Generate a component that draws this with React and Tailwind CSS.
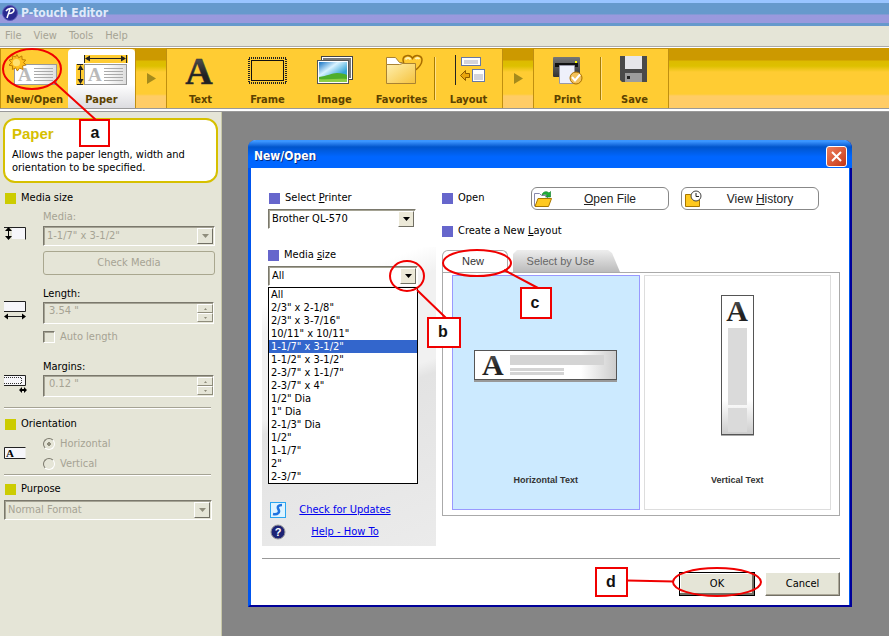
import React from "react";

const MEDIA_SIZES = [
  "All",
  '2/3" x 2-1/8"',
  '2/3" x 3-7/16"',
  '10/11" x 10/11"',
  '1-1/7" x 3-1/2"',
  '1-1/2" x 3-1/2"',
  '2-3/7" x 1-1/7"',
  '2-3/7" x 4"',
  '1/2" Dia',
  '1" Dia',
  '2-1/3" Dia',
  '1/2"',
  '1-1/7"',
  '2"',
  '2-3/7"',
];

const SERIF = "Liberation Serif, serif";

/* ---------- toolbar icons ---------- */

function Label({ x, y }) {
  return (
    <g>
      <rect x={x + 0.5} y={y + 0.5} width="42" height="20" fill="url(#labelFill)" stroke="#999" />
      <text x={x + 4} y={y + 17} fontFamily={SERIF} fontWeight="bold" fontSize="19" fill="#b9b9b9">A</text>
      <path d={`M${x + 20} ${y + 4.5}h19M${x + 20} ${y + 7.5}h19M${x + 20} ${y + 10.5}h19M${x + 20} ${y + 13.5}h19M${x + 20} ${y + 16.5}h19`} stroke="#aaa" />
      <defs>
        <linearGradient id="labelFill" x1="0" x2="1">
          <stop offset="0.5" stopColor="#fff" />
          <stop offset="1" stopColor="#ddd" />
        </linearGradient>
      </defs>
    </g>
  );
}

function NewOpenIcon() {
  return (
    <svg width="52" height="34" aria-hidden="true">
      <Label x={5} y={12} />
      <g transform="translate(-2 -1) scale(.9)">
        <path d="M11 4l2 3.5 3.500-2 .3 4 4 .5-2.500 3 3 2.500-4 1 .5 4-3.800-1.500-2.500 3.300-1.800-3.500-3.700 1.700.2-4-4-.7 2.800-3-2.800-2.700 4-1-.5-4 3.700 1.600z" fill="#ffbf1f" stroke="#b87400" />
        <circle cx="10.500" cy="13" r="4" fill="#ffe070" />
      </g>
    </svg>
  );
}

function PaperIcon() {
  return (
    <svg width="52" height="34" aria-hidden="true">
      <path d="M8 3h44v8H8zM0 12h8v21H0z" fill="#fc3" />
      <Label x={8} y={12} />
      <path d="M8.500 3v8M50.500 3v8M10 6.500h39M1 12.500h6M1 32.500h6M4.500 14v17" stroke="#222" />
      <path d="M9 6.500l5-3v6zM50 6.500l-5-3v6zM4.500 13l-3 5h6zM4.500 32l-3-5h6z" fill="#222" />
    </svg>
  );
}

function TextIcon() {
  return (
    <svg width="52" height="34" className="overflow-visible" aria-hidden="true">
      <defs>
        <linearGradient id="ink" x1="0" y1="0" x2="0" y2="1">
          <stop offset="0" stopColor="#666" />
          <stop offset="0.6" stopColor="#222" />
        </linearGradient>
      </defs>
      <text x="24" y="32" textAnchor="middle" fontFamily={SERIF} fontWeight="bold" fontSize="38" fill="url(#ink)" stroke="#333" strokeWidth=".5">A</text>
    </svg>
  );
}

function FrameIcon() {
  return (
    <svg width="52" height="34" aria-hidden="true">
      <rect x="7" y="6" width="37" height="25" fill="none" stroke="#222" strokeWidth="2" strokeDasharray="1 1" />
      <rect x="9.500" y="8.500" width="32" height="20" fill="none" stroke="#111" />
    </svg>
  );
}

function ImageIcon() {
  return (
    <svg width="52" height="34" aria-hidden="true">
      <defs>
        <linearGradient id="sky" x1="0" y1="0" x2="1" y2="1">
          <stop offset="0" stopColor="#1673c4" />
          <stop offset="0.35" stopColor="#d8f2ff" />
          <stop offset="0.7" stopColor="#37a6d8" />
        </linearGradient>
      </defs>
      <rect x="12.500" y="4.500" width="31" height="23" fill="#fff" stroke="#444" />
      <rect x="14" y="6" width="28" height="20" fill="#777" />
      <rect x="8.500" y="8.500" width="31" height="23" fill="#fff" stroke="#555" />
      <rect x="10" y="10" width="28" height="20" fill="url(#sky)" />
      <path d="M10 25c8-1 13-4 18-4s8 1 10 2v7H10z" fill="#4fae2b" />
      <path d="M10 27c9 1 19-1 28 0v3H10z" fill="#8ccf45" />
    </svg>
  );
}

function FavoritesIcon() {
  return (
    <svg width="52" height="34" aria-hidden="true">
      <defs>
        <linearGradient id="folder" x1="0" y1="0" x2="1" y2="1">
          <stop offset="0" stopColor="#fff0b0" />
          <stop offset="1" stopColor="#f5c23c" />
        </linearGradient>
      </defs>
      <path d="M37 20c-6-4-10-8-10-12 0-5 7-6 9.500-1.500C39 2 46 3 46 8c0 4-3 8-9 12z" fill="#ffc933" stroke="#a86d00" strokeWidth="1.500" />
      <path d="M29.500 7.500c1-2 4-2 5 0M39.500 7c1-1.500 3-1.500 4 0" stroke="#fff3b8" strokeWidth="2" fill="none" />
      <path d="M10.500 30V5.500h9l4 5h3V16" fill="#fff" stroke="#a98232" />
      <path d="M10.500 12.500h13l3-1h13v20h-29z" fill="url(#folder)" stroke="#a98232" />
    </svg>
  );
}

function LayoutIcon() {
  return (
    <svg width="52" height="34" aria-hidden="true">
      <path d="M12.500 3v30" stroke="#222" strokeWidth="1" />
      <rect x="18.500" y="5.500" width="19" height="8" fill="#fff" stroke="#6678a8" />
      <rect x="21" y="8" width="14" height="4" fill="#d4d4dc" />
      <rect x="29.500" y="17.500" width="12" height="12" fill="#fff" stroke="#6678a8" />
      <rect x="31" y="22" width="9" height="6" fill="#d4d4dc" />
      <path d="M17.500 23.500l5-5v3h4v4h-4v3z" fill="#e9a50c" stroke="#8f5c00" />
    </svg>
  );
}

function PrintIcon() {
  return (
    <svg width="52" height="34" aria-hidden="true">
      <defs>
        <linearGradient id="printer" x1="0" y1="0" x2="0" y2="1">
          <stop offset="0" stopColor="#777" />
          <stop offset="1" stopColor="#333" />
        </linearGradient>
      </defs>
      <rect x="11" y="5" width="27" height="20" rx="1" fill="url(#printer)" />
      <rect x="13" y="11" width="23" height="4" fill="#111" />
      <rect x="33" y="9" width="2" height="2" fill="#ff0" />
      <path d="M17.500 13.500h15v18h-15z" fill="#eef0fa" stroke="#99a" />
      <circle cx="34" cy="26" r="6" fill="#f3c15a" stroke="#a97000" />
      <path d="M30 25l3 3.500 5-6" fill="none" stroke="#fff" strokeWidth="2" />
    </svg>
  );
}

function SaveIcon() {
  return (
    <svg width="52" height="34" aria-hidden="true">
      <path d="M11 4h27v26H13l-2-2z" fill="#4a4a4a" />
      <rect x="16" y="4" width="17" height="13" fill="#e6e6ea" />
      <rect x="16" y="21" width="17" height="9" fill="#9c9c9c" />
      <rect x="18" y="24" width="3" height="3" fill="#222" />
    </svg>
  );
}

/* ---------- small parts ---------- */

function Tool({ icon, label, active }) {
  return (
    <button
      type="button"
      className={
        "flex h-full w-[67px] flex-col items-center justify-between pt-[3px] pb-px text-[11px] leading-[14px] font-bold text-[#5c4200] " +
        (active ? "rounded-t-sm bg-linear-to-b from-white from-60% to-[#dcdce0]" : "")
      }
    >
      {icon}
      <span className="whitespace-nowrap">{label}</span>
    </button>
  );
}

function Divider() {
  return <div className="my-2 -mx-px w-[2px] border-l border-[#a87c00] bg-[#ffe08a]" />;
}

function Chevron() {
  return (
    <div className="flex w-[30px] items-center justify-center">
      <svg width="9" height="11" aria-hidden="true">
        <path d="M0 0l9 5.500L0 11z" fill="#a58a1c" />
      </svg>
    </div>
  );
}

function Square({ color }) {
  return <span className={"size-[11px] shrink-0 " + color} />;
}

function PanelHeading({ children, className = "" }) {
  return (
    <h3 className={"flex h-5 items-center gap-[5px] pl-[5px] " + className}>
      <Square color="bg-[#cccc00]" />
      {children}
    </h3>
  );
}

function ArrowBox({ disabled }) {
  return (
    <span
      className={
        "pointer-events-none absolute top-[2px] right-[2px] bottom-[2px] flex w-4 items-center justify-center border border-t-white border-l-white border-r-[#716f64] border-b-[#716f64] " +
        (disabled ? "bg-[#e5e5d7]" : "bg-[#ece9d8]")
      }
    >
      <svg width="7" height="4" aria-hidden="true">
        <path d="M0 0h7L3.500 4z" fill={disabled ? "#8f8d7c" : "#000"} />
      </svg>
    </span>
  );
}

const SUNKEN = "border border-t-[#7a786c] border-l-[#7a786c] border-r-white border-b-white shadow-[inset_1px_1px_0_#a5a394]";

function DisabledSelect({ id, value, label }) {
  return (
    <div className="relative">
      <select
        id={id}
        aria-label={label}
        disabled
        className={"block h-5 w-full appearance-none bg-[#e5e5d7] pl-[3px] text-[#a5a394] opacity-100 " + SUNKEN}
      >
        <option>{value}</option>
      </select>
      <ArrowBox disabled />
    </div>
  );
}

function DisabledSpin({ id, value }) {
  return (
    <div className={"flex h-[22px] " + SUNKEN}>
      <input id={id} disabled defaultValue={value} className="min-w-0 flex-1 bg-transparent pb-[3px] pl-[5px] text-[#a5a394]" />
      <div className="my-px flex w-4 flex-col">
        {["Increase", "Decrease"].map((name) => (
          <button
            key={name}
            type="button"
            disabled
            aria-label={name}
            className="flex flex-1 items-center justify-center border border-t-white border-l-white border-r-[#8f8d7c] border-b-[#8f8d7c]"
          >
            <svg width="3" height="2" aria-hidden="true">
              <path d={name === "Increase" ? "M0 2h3L1.500 0z" : "M0 0h3L1.500 2z"} fill="#8f8d7c" />
            </svg>
          </button>
        ))}
      </div>
    </div>
  );
}

function Field({ icon, children, className = "" }) {
  return (
    <div className={"flex " + className}>
      <div className="w-[43px] shrink-0 pl-1">{icon}</div>
      <div className="min-w-0 flex-1">{children}</div>
    </div>
  );
}

function Rule() {
  return <div className="mr-[10px] ml-1 h-[2px] border-t border-[#a5a394] bg-white" />;
}

/* ---------- left panel ---------- */

function LeftPanel() {
  return (
    <aside className="w-[222px] shrink-0 border-r border-[#c8c8a8] bg-[#e5e5d7] pt-[6px]">
      <section className="mr-[3px] ml-[3px] h-[65px] rounded-xl border-2 border-[#d6c000] bg-white px-[7px] pt-[5px]">
        <h2 className="font-['Liberation_Sans'] text-[15px] leading-[18px] font-bold text-[#d6c000]">Paper</h2>
        <p className="mt-[5px] leading-[13px]">Allows the paper length, width and orientation to be specified.</p>
      </section>

      <PanelHeading className="mt-[5px]">Media size</PanelHeading>
      <Field
        className="mt-px pr-[6px]"
        icon={
          <svg width="23" height="15" className="mt-[17px]" aria-hidden="true">
            <path d="M0 1.500h21.500v12" fill="none" stroke="#222" />
            <rect x="8" y="2" width="13" height="11" fill="#f6f6fa" />
            <path d="M4.500 3v10" stroke="#000" />
            <path d="M4.500 1l-3.500 4h7zM4.500 14l-3.500-4h7z" fill="#000" />
          </svg>
        }
      >
        <label htmlFor="media" className="block h-[17px] leading-4 text-[#a5a394]">Media:</label>
        <DisabledSelect id="media" value={'1-1/7" x 3-1/2"'} />
        <button type="button" disabled className="mt-[5px] h-6 w-full rounded-[3px] border border-[#a9a78f] text-[#a5a394]">
          Check Media
        </button>
      </Field>

      <Field
        className="mt-[11px] pr-[7px]"
        icon={
          <svg width="23" height="20" className="mt-[15px]" aria-hidden="true">
            <rect x="0" y="0" width="21" height="10" fill="#f6f6fa" />
            <path d="M0 .5h21.500v10H0M1 15.500h20" fill="none" stroke="#222" />
            <path d="M0 15.500l4-3v6zM22 15.500l-4-3v6z" fill="#000" />
          </svg>
        }
      >
        <label htmlFor="length" className="block h-4 leading-4">Length:</label>
        <DisabledSpin id="length" value={'3.54 "'} />
        <label className="mt-[5px] flex h-4 items-center gap-[5px] text-[#a5a394]">
          <input type="checkbox" disabled className={"size-3 appearance-none " + SUNKEN} />
          Auto length
        </label>
      </Field>

      <Field
        className="mt-[14px] pr-[7px]"
        icon={
          <svg width="23" height="19" className="mt-4" aria-hidden="true">
            <rect x="0" y="0" width="21" height="10" fill="#f6f6fa" />
            <path d="M0 .5h21.500v10H0" fill="none" stroke="#222" />
            <path d="M0 2.500h17.500v6H0" fill="none" stroke="#333" strokeDasharray="1 1" />
            <path d="M15 15l3-3v2h2v-2l3 3-3 3v-2h-2v2z" fill="#000" />
          </svg>
        }
      >
        <label htmlFor="margins" className="block h-4 leading-4">Margins:</label>
        <DisabledSpin id="margins" value={'0.12 "'} />
      </Field>

      <div className="mt-[10px]"><Rule /></div>
      <PanelHeading className="mt-[5px]">Orientation</PanelHeading>
      <Field
        icon={
          <svg width="23" height="14" className="mt-3" aria-hidden="true">
            <path d="M21.500 1.500H.5v11h21" fill="#f6f6fa" stroke="#222" />
            <text x="2" y="11" fontFamily={SERIF} fontWeight="bold" fontSize="11">A</text>
          </svg>
        }
      >
        {["Horizontal", "Vertical"].map((name) => (
          <label key={name} className="flex h-5 items-center gap-[5px] text-[#a5a394]">
            <input
              type="radio"
              name="orientation"
              disabled
              defaultChecked={name === "Horizontal"}
              className="size-3 appearance-none rounded-full border border-t-[#7a786c] border-l-[#7a786c] border-r-white border-b-white checked:bg-[radial-gradient(circle,#8f8d7c_2px,transparent_2px)]"
            />
            {name}
          </label>
        ))}
      </Field>
      <Rule />
      <PanelHeading className="mt-[3px]">Purpose</PanelHeading>
      <div className="mt-px mr-[9px] ml-1">
        <DisabledSelect id="purpose" label="Purpose" value="Normal Format" />
      </div>
    </aside>
  );
}

/* ---------- dialog ---------- */

function DialogHeading({ children, as: Tag = "h3", ...rest }) {
  return (
    <Tag className="flex h-4 items-center gap-[5px]" {...rest}>
      <Square color="bg-[#6666cc]" />
      <span>{children}</span>
    </Tag>
  );
}

function Combo({ id, value }) {
  return (
    <div className="relative">
      <select id={id} className={"block h-5 w-full appearance-none bg-white pl-[3px] text-black " + SUNKEN}>
        <option>{value}</option>
      </select>
      <ArrowBox />
    </div>
  );
}

function FileButton({ icon, children }) {
  return (
    <button type="button" className="flex h-[23px] w-[138px] items-center rounded-md border border-[#888] bg-white pl-[2px] font-['Liberation_Sans'] text-[12px] text-[#222]">
      {icon}
      <span className="flex-1 text-center">{children}</span>
    </button>
  );
}

function OpenFileIcon() {
  return (
    <svg width="18" height="18" aria-hidden="true">
      <path d="M.5 16V3.500h5l2 2h6V9" fill="#fff" stroke="#88a" />
      <path d="M8 5c1-4 5-4 7-2l1.500-1.500V7h-5l2-2c-2-1-3-1-5.500 0z" fill="#1fae3a" stroke="#0c7a22" strokeWidth=".6" />
      <path d="M1 16.500l3-8h13.500l-3 8z" fill="#ffc91f" stroke="#a87700" />
    </svg>
  );
}

function HistoryIcon() {
  return (
    <svg width="18" height="18" aria-hidden="true">
      <path d="M1.500 16.500v-12h5l2 2h7v10z" fill="#ffc91f" stroke="#a87700" />
      <circle cx="12" cy="6" r="5" fill="#fff" stroke="#444" />
      <path d="M12 3v3.500h3" fill="none" stroke="#222" />
    </svg>
  );
}

function LeftColumn() {
  return (
    <div className="w-[174px] shrink-0">
      <div className="flex flex-col pt-[22px] pr-5 pl-[7px]">
        <DialogHeading as="label" htmlFor="printer">Select <u>P</u>rinter</DialogHeading>
        <div className="mt-[3px] -ml-px"><Combo id="printer" value="Brother QL-570" /></div>
      </div>
      <div className="mt-[18px] bg-[linear-gradient(160deg,#fff_0%,#fff_16%,#f1f1f1_24%,#f1f1f1_48%,#e3e3e3_52%,#ebebeb_100%)] pr-[18px] pb-[6px] pl-[6px]">
        <div className="relative">
          <DialogHeading as="label" htmlFor="media-size">Media <u>s</u>ize</DialogHeading>
          <div className="mt-[3px]"><Combo id="media-size" value="All" /></div>
          <ul role="listbox" aria-label="Media size" className="absolute inset-x-0 top-10 border border-black bg-white">
            {MEDIA_SIZES.map((s) => (
              <li
                key={s}
                role="option"
                aria-selected={s === '1-1/7" x 3-1/2"'}
                className="h-[13px] pl-[2px] leading-[13px] aria-selected:bg-[#3366cc] aria-selected:text-white"
              >
                {s}
              </li>
            ))}
          </ul>
        </div>
        <div className="mt-[216px] flex flex-col gap-[6px] pr-[14px] pl-[2px] text-[#0000ee] underline">
          <div className="flex h-4 items-center">
            <svg width="16" height="16" aria-hidden="true">
              <rect x=".5" y=".5" width="15" height="15" fill="#dff4ff" stroke="#2aa5f0" />
              <path d="M12 3c-4 0-5 2-3.500 4.500S8 13 3 12" fill="none" stroke="#1f73e0" strokeWidth="2.500" />
            </svg>
            <a href="#updates" className="flex-1 text-center">Check for Updates</a>
          </div>
          <div className="flex h-4 items-center">
            <svg width="16" height="16" aria-hidden="true">
              <circle cx="8" cy="8" r="7" fill="#1d2375" stroke="#999" />
              <text x="8" y="12" textAnchor="middle" fontFamily="Liberation Sans, sans-serif" fontWeight="bold" fontSize="11" fill="#fff">?</text>
            </svg>
            <a href="#help" className="flex-1 text-center">Help - How To</a>
          </div>
        </div>
      </div>
    </div>
  );
}

function Tile({ selected, label, children }) {
  return (
    <button
      type="button"
      aria-pressed={!!selected}
      className={
        "flex flex-1 flex-col items-center border pt-[19px] pb-[22px] font-['Liberation_Sans'] text-[9px] leading-[14px] font-bold text-[#333] " +
        (selected ? "border-[#9999ff] bg-[#cceaff]" : "border-[#ddd] bg-white")
      }
    >
      <span className="flex flex-1 items-center pb-[36px]">{children}</span>
      <span>{label}</span>
    </button>
  );
}

function RightColumn() {
  return (
    <div className="flex min-w-0 flex-1 flex-col pt-[19px]">
      <div className="flex items-center">
        <div className="w-[89px]"><DialogHeading>Open</DialogHeading></div>
        <div className="flex gap-3">
          <FileButton icon={<OpenFileIcon />}><u>O</u>pen File</FileButton>
          <FileButton icon={<HistoryIcon />}>View <u>H</u>istory</FileButton>
        </div>
      </div>
      <div className="mt-[13px]"><DialogHeading>Create a New <u>L</u>ayout</DialogHeading></div>

      <div role="tablist" className="mt-[11px] flex h-[22px] gap-[5px] font-['Liberation_Sans'] text-[11px]">
        <button role="tab" aria-selected="true" type="button" className="h-full w-[66px] rounded-t-md border border-b-0 border-[#aaa] bg-white pr-1 text-[#333]">
          New
        </button>
        <button
          role="tab"
          aria-selected="false"
          type="button"
          className="h-full w-[107px] bg-linear-to-b from-[#eee] to-[#bbb] pr-3 text-[#666] [clip-path:polygon(0_4px,4px_0,95px_0,99px_3px,107px_100%,0_100%)]"
        >
          Select by Use
        </button>
      </div>
      <div className="flex flex-1 gap-1 border border-[#aaa] pt-[2px] pr-2 pb-[5px] pl-[9px]">
        <Tile selected label="Horizontal Text">
          <svg width="143" height="33" className="overflow-visible" aria-hidden="true">
            <defs>
              <linearGradient id="tape" x1="0" x2="1">
                <stop offset="0.75" stopColor="#fff" />
                <stop offset="1" stopColor="#ccc" />
              </linearGradient>
            </defs>
            <rect x="0" y="30" width="143" height="2" fill="#999" />
            <rect x=".5" y=".5" width="142" height="29" fill="url(#tape)" stroke="#555" />
            <text x="8" y="25" fontFamily={SERIF} fontWeight="bold" fontSize="30" fill="url(#ink)">A</text>
            <path d="M36 5h94v10H36z" fill="#d4d4d4" />
            <path d="M36 18h54v3H36zM36 22h54v3H36z" fill="#d4d4d4" />
          </svg>
        </Tile>
        <Tile label="Vertical Text">
          <svg width="33" height="142" className="overflow-visible" aria-hidden="true">
            <defs>
              <linearGradient id="tapeV" x1="0" y1="0" x2="0" y2="1">
                <stop offset="0.75" stopColor="#fff" />
                <stop offset="1" stopColor="#ccc" />
              </linearGradient>
            </defs>
            <rect x="0" y="139" width="33" height="2" fill="#aaa" />
            <rect x=".5" y=".5" width="32" height="139" fill="url(#tapeV)" stroke="#555" />
            <text x="16" y="26" textAnchor="middle" fontFamily={SERIF} fontWeight="bold" fontSize="30" fill="url(#ink)">A</text>
            <path d="M7 33h19v77H7zM7 113h19v24H7z" fill="#dadada" />
          </svg>
        </Tile>
      </div>
    </div>
  );
}

function Dialog() {
  return (
    <div
      role="dialog"
      aria-label="New/Open"
      className="absolute top-7 left-[26px] flex w-[604px] flex-col rounded-t-lg border-2 border-t-0 border-l-[#0055ee] border-r-[#000099] border-b-[#000099] bg-white"
    >
      <header className="-mx-[2px] flex h-7 items-center justify-between rounded-t-lg bg-linear-to-b from-[#3a95ff] from-5% via-[#0055cc] via-25% to-[#0066ff] to-60% pt-1 pr-[5px] pl-[6px]">
        <h1 className="text-[12px] font-bold text-white [text-shadow:1px_1px_#002a80]">New/Open</h1>
        <button type="button" aria-label="Close" className="flex size-[21px] items-center justify-center rounded-[3px] border border-white bg-linear-to-br from-[#ee7f5c] to-[#c53411]">
          <svg width="11" height="11" aria-hidden="true">
            <path d="M1 1l9 9M10 1l-9 9" stroke="#fff" strokeWidth="2" />
          </svg>
        </button>
      </header>
      <div className="border-x border-[#0055ee] pr-[9px] pb-[9px] pl-[11px]">
        <div className="flex gap-[6px] pb-3">
          <LeftColumn />
          <div className="flex min-w-0 flex-1 pb-[30px]"><RightColumn /></div>
        </div>
        <footer className="flex justify-end gap-[10px] border-t border-[#999] pt-[13px]">
          <button type="button" className="h-6 w-[76px] border border-black bg-[#e5e5d7] shadow-[inset_-2px_-2px_0_#716f64,inset_1px_1px_0_#fff]">OK</button>
          <button type="button" className="h-6 w-[75px] border border-t-white border-l-white border-r-[#716f64] border-b-[#716f64] bg-[#e5e5d7] shadow-[inset_-1px_-1px_0_#aca899]">Cancel</button>
        </footer>
      </div>
    </div>
  );
}

/* ---------- red call-outs drawn over the window ---------- */

function Callouts() {
  return (
    <svg width="889" height="636" className="pointer-events-none absolute top-0 left-0">
      <g fill="none" stroke="#f00000" strokeWidth="2">
        <ellipse cx="32" cy="69" rx="29" ry="20" />
        <path d="M54 82l42 38M417 290l29 28M504 270l34 18M627 580.500l47 1" />
        <ellipse cx="407" cy="276" rx="17" ry="15" />
        <ellipse cx="477" cy="263" rx="34" ry="13" />
        <ellipse cx="717" cy="582" rx="44" ry="14" />
        <g fill="#fff">
          <rect x="80" y="120" width="29" height="26" />
          <rect x="428" y="318" width="32" height="29" />
          <rect x="521" y="288" width="30" height="30" />
          <rect x="596" y="568" width="31" height="28" />
        </g>
      </g>
      <g fontFamily="Liberation Sans, sans-serif" fontWeight="bold" fontSize="16" fill="#111" textAnchor="middle">
        <text x="95" y="138">a</text>
        <text x="443" y="337">b</text>
        <text x="535" y="308">c</text>
        <text x="611" y="587">d</text>
      </g>
    </svg>
  );
}

export default function App() {
  return (
    <div className="relative flex min-h-screen flex-col overflow-hidden bg-[#858585] font-['DejaVu_Sans_Condensed','DejaVu_Sans',sans-serif] text-[11px] text-black">
      <header className="flex h-[26px] items-center gap-[3px] border-t-[3px] border-b-[3px] border-t-[#99c4ff] border-b-[#6699cc] bg-linear-to-b from-[#6699cc] from-55% to-[#9999dd] to-60% pl-[2px]">
        <svg width="16" height="16" aria-hidden="true">
          <circle cx="8" cy="8" r="7.500" fill="#2a2a90" stroke="#5a5ab8" />
          <path d="M5 13l3-9M4 6c2-3 8-4 8-1s-4 4-6 3" fill="none" stroke="#fff" strokeWidth="1.500" />
        </svg>
        <span className="text-[12px] font-bold text-[#dfe9fa]">P-touch Editor</span>
      </header>
      <nav className="flex h-[22px] items-center gap-3 border-b border-white bg-[#e5e5d7] pl-[5px] text-[#a5a394] shadow-[inset_0_-1px_#aaa]">
        {["File", "View", "Tools", "Help"].map((m) => (
          <button key={m} type="button">{m}</button>
        ))}
      </nav>
      <div className="flex h-[61px] border-b border-[#999] bg-[linear-gradient(#cc9900_0,#cc9900_12px,#ddbb00_13px,#ddc000_18px,#ffcc33_24px,#ffcc33_46px,#ffcc66_48px)]">
        <div className="flex border-x border-t border-[#c08f10] bg-[#ffcc33]">
          <Tool icon={<NewOpenIcon />} label="New/Open" />
          <Tool active icon={<PaperIcon />} label="Paper" />
        </div>
        <Chevron />
        <div className="flex border-x border-t border-[#c08f10] bg-[#ffcc33]">
          <Tool icon={<TextIcon />} label="Text" />
          <Tool icon={<FrameIcon />} label="Frame" />
          <Tool icon={<ImageIcon />} label="Image" />
          <Tool icon={<FavoritesIcon />} label="Favorites" />
          <Divider />
          <Tool icon={<LayoutIcon />} label="Layout" />
        </div>
        <Chevron />
        <div className="flex border-x border-t border-[#c08f10] bg-[#ffcc33]">
          <Tool icon={<PrintIcon />} label="Print" />
          <Divider />
          <Tool icon={<SaveIcon />} label="Save" />
        </div>
      </div>
      <div className="h-[3px] border-b border-[#999] bg-white" />
      <main className="flex flex-1">
        <LeftPanel />
        <div className="relative flex-1">
          <Dialog />
        </div>
      </main>
      <Callouts />
    </div>
  );
}
